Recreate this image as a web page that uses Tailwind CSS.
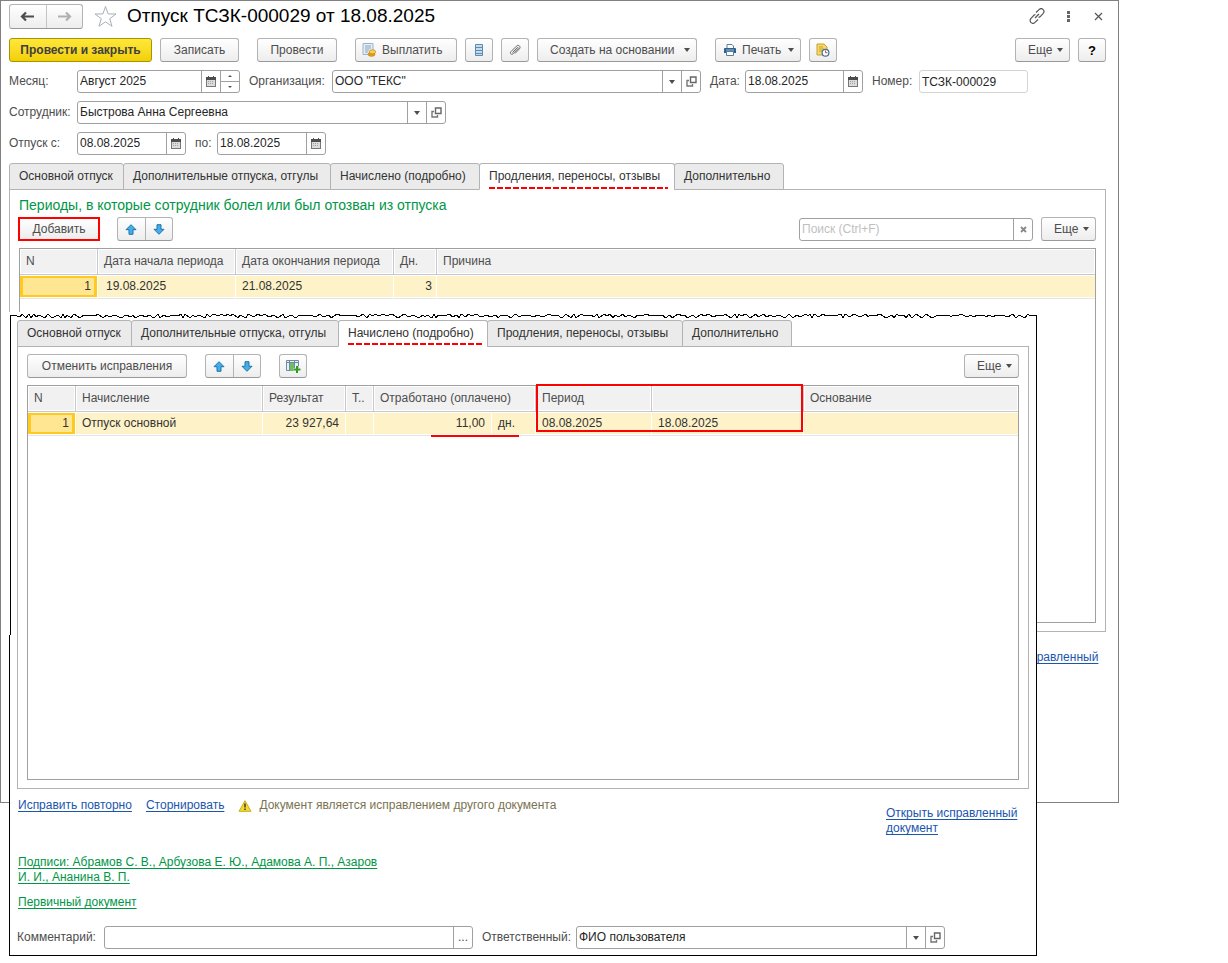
<!DOCTYPE html>
<html lang="ru">
<head>
    <meta charset="UTF-8">
    <meta name="viewport" content="width=device-width, initial-scale=1.0">
    <title>Отпуск ТСЗК-000029 от 18.08.2025</title>
    <script src="https://cdn.jsdelivr.net/npm/@tailwindcss/browser@4"></script>
</head>
<body class="bg-white font-['Liberation_Sans',Arial,sans-serif] text-xs leading-[15px] text-[#4d4d4d]">

    <!-- shared icons -->
    <svg class="hidden">
        <symbol id="i-cal" viewBox="0 0 10 11">
            <path d="M0 1h10v10H0z" fill="#777"/><path d="M0 1h10v3H0z" fill="#4d4d4d"/><path d="M1 4h8v6H1z" fill="#dcdcdc"/>
            <path d="M2 0h1v2H2zM7 0h1v2H7z" fill="#4d4d4d"/>
            <path d="M2 5h1v1H2zM4 5h1v1H4zM6 5h1v1H6zM2 7h1v1H2zM4 7h1v1H4zM6 7h1v1H6z" fill="#a0a0a0"/>
        </symbol>
        <symbol id="i-down" viewBox="0 0 6 4"><path d="M0 0h6L3 4z" fill="#4d4d4d"/></symbol>
        <symbol id="i-open" viewBox="0 0 11 11">
            <path d="M4.500 1h5.500v5.500H4.500z" fill="none" stroke="#666" stroke-width="1.400"/>
            <path d="M3 4.500H1V10h5.500V8" fill="none" stroke="#777" stroke-width="1.400"/>
        </symbol>
        <symbol id="i-up-blue" viewBox="0 0 12 11"><path d="M6 .7l5 5H8v4.600H4V5.700H1z" fill="#42aeea" stroke="#2272a8" stroke-width="1"/></symbol>
        <symbol id="i-down-blue" viewBox="0 0 12 11"><path d="M6 10.300l5-5H8V.7H4v4.600H1z" fill="#42aeea" stroke="#2272a8" stroke-width="1"/></symbol>
    </svg>

    <div class="relative mr-[109px] min-h-[956px]">

        <main class="flex min-h-[803px] flex-col border border-[#808080] pt-[3px] pr-3 pl-2">

            <header class="flex h-6 items-center">
                <div class="flex h-[25px] w-[74px] rounded-[3px] border border-[#b3b3b3] border-b-[#999] bg-linear-to-b from-white to-[#ededed]">
                    <button aria-label="Назад" class="flex flex-1 items-center justify-center border-r border-[#c4c4c4]">
                        <svg class="h-[11px] w-[15px]" viewBox="0 0 15 11"><path d="M14 5.500H2M6 1.500l-4 4 4 4" fill="none" stroke="#4d4d4d" stroke-width="2.200"/></svg>
                    </button>
                    <button aria-label="Вперед" class="flex flex-1 items-center justify-center">
                        <svg class="h-[11px] w-[15px]" viewBox="0 0 15 11"><path d="M1 5.500h12M9 1.500l4 4-4 4" fill="none" stroke="#b0b0b0" stroke-width="2.200"/></svg>
                    </button>
                </div>
                <button aria-label="В избранное" class="ml-[11px]">
                    <svg class="h-[23px] w-[23px]" viewBox="0 0 23 23"><path d="M11.500 1.500l2.600 7.400 7.900.1-6.300 4.700 2.300 7.600-6.500-4.500L5 21.300l2.300-7.600L1 9l7.900-.1z" fill="none" stroke="#a9b0b6" stroke-width="1"/></svg>
                </button>
                <h1 class="ml-[10px] text-[19px] leading-6 text-black">Отпуск ТСЗК-000029 от 18.08.2025</h1>
                <div class="ml-auto flex items-center pr-[3px]">
                    <button aria-label="Ссылка" class="mr-[22px]">
                        <svg class="h-4 w-4" viewBox="0 0 16 16"><path d="M6 10l4-4M7 4.500L10 1.700a2.700 2.700 0 0 1 4.200 3.600l-3.200 3.500a2.500 2.500 0 0 1-1.500.7M9 11.500L6 14.300a2.700 2.700 0 0 1-4.200-3.600L5 7.200a2.500 2.500 0 0 1 1.500-.7" fill="none" stroke="#555" stroke-width="1.200"/></svg>
                    </button>
                    <button aria-label="Меню" class="mr-6">
                        <svg class="h-[11px] w-[3px]" viewBox="0 0 3 11"><path d="M0 0h3v3H0zM0 4h3v3H0zM0 8h3v3H0z" fill="#666"/></svg>
                    </button>
                    <button aria-label="Закрыть">
                        <svg class="h-[9px] w-[9px]" viewBox="0 0 9 9"><path d="M1 1l7 7M8 1L1 8" stroke="#555" stroke-width="1.200"/></svg>
                    </button>
                </div>
            </header>

            <div class="mt-[10px] flex h-6 gap-2 *:flex *:items-center *:rounded-[3px] *:border">
                <button class="w-[143px] justify-center border-[#a89400] bg-linear-to-b from-[#ffe838] to-[#f2cf00] font-bold text-[#404040]">Провести и закрыть</button>
                <button class="mr-[10px] w-[79px] justify-center border-[#b3b3b3] border-b-[#999] bg-linear-to-b from-white to-[#ededed]">Записать</button>
                <button class="mr-[10px] w-20 justify-center border-[#b3b3b3] border-b-[#999] bg-linear-to-b from-white to-[#ededed]">Провести</button>
                <button class="w-[102px] gap-[6px] border-[#b3b3b3] border-b-[#999] bg-linear-to-b from-white to-[#ededed] pl-[6px]">
                    <svg class="h-[14px] w-[14px]" viewBox="0 0 14 14"><path d="M1 .5h10v11H1z" fill="#e3edf5" stroke="#9db4c8"/><path d="M3 3h6M3 5h6M3 7h4M3 9h3" stroke="#8aa6bd"/><ellipse cx="9.500" cy="11.300" rx="3.500" ry="2" fill="#e3a01c" stroke="#b67a10" stroke-width=".6"/><ellipse cx="10.500" cy="8.800" rx="3.200" ry="2" fill="#ffd04d" stroke="#b67a10" stroke-width=".6"/></svg>
                    Выплатить
                </button>
                <button aria-label="Реестр" class="w-7 justify-center border-[#b3b3b3] border-b-[#999] bg-linear-to-b from-white to-[#ededed]">
                    <svg class="h-3 w-2" viewBox="0 0 8 12"><path d="M.5.500h7v11h-7z" fill="#c3dcf0" stroke="#5f8bb0"/><path d="M1 3.500h6M1 6.500h6M1 9.500h6" stroke="#5f8bb0"/></svg>
                </button>
                <button aria-label="Файлы" class="w-7 justify-center border-[#b3b3b3] border-b-[#999] bg-linear-to-b from-white to-[#ededed]">
                    <svg class="h-3 w-3" viewBox="0 0 12 12"><path d="M3.500 8.500l4.600-4.700c.8-.8 1.700.1.900.9l-5 5.100c-1.500 1.500-3.600-.5-2.100-2.100l5.500-5.500c2.200-2.200 5 .6 2.900 2.800L6 9.500" fill="none" stroke="#666" stroke-width="1"/></svg>
                </button>
                <button class="mr-[10px] w-40 justify-between border-[#b3b3b3] border-b-[#999] bg-linear-to-b from-white to-[#ededed] pr-[6px] pl-3">Создать на основании <svg class="h-1 w-[6px]"><use href="#i-down"/></svg></button>
                <button class="w-[86px] items-center border-[#b3b3b3] border-b-[#999] bg-linear-to-b from-white to-[#ededed] px-[6px]">
                    <svg class="ml-[2px] mr-[6px] h-3 w-3" viewBox="0 0 12 12"><path d="M3 4V.5h5L9.500 2v2" fill="#fff" stroke="#5d7f9c"/><path d="M0 4.500Q0 4 1 4h10q1 0 1 .5V9H0z" fill="#2f5f8a"/><path d="M2.500 7.500h7v4h-7z" fill="#fff" stroke="#5d7f9c"/><path d="M2 6h8" stroke="#9fc0dc"/></svg>
                    Печать
                    <svg class="ml-auto h-1 w-[6px]"><use href="#i-down"/></svg>
                </button>
                <button aria-label="История" class="w-7 justify-center border-[#b3b3b3] border-b-[#999] bg-linear-to-b from-white to-[#ededed]">
                    <svg class="h-[14px] w-[14px]" viewBox="0 0 14 14"><path d="M1 1h7l3 3v8H1z" fill="#f6d76b" stroke="#c9a22c"/><path d="M3 4h4M3 6h5M3 8h3" stroke="#c9a22c"/><circle cx="9.500" cy="9.700" r="3.400" fill="#fff" stroke="#41719c" stroke-width="1.200"/><path d="M9.500 7.500v2.200h2" fill="none" stroke="#c0504d"/></svg>
                </button>
                <button class="ml-auto w-[55px] justify-between border-[#b3b3b3] border-b-[#999] bg-linear-to-b from-white to-[#ededed] pr-[6px] pl-3">Еще <svg class="h-1 w-[6px]"><use href="#i-down"/></svg></button>
                <button class="w-7 justify-center border-[#b3b3b3] border-b-[#999] bg-linear-to-b from-white to-[#ededed] text-[13px] font-bold text-black">?</button>
            </div>

            <div class="mt-2 mr-[78px] flex h-[23px] items-center">
                <label for="month" class="w-[68px]">Месяц:</label>
                <div class="flex h-[23px] w-[163px] rounded-[3px] border border-[#a0a0a0]">
                    <input id="month" value="Август 2025" class="min-w-0 flex-1 px-[2px] text-[#262626]">
                    <button aria-label="Календарь" class="flex w-[19px] items-center justify-center border-l border-[#a0a0a0]"><svg class="h-[11px] w-[10px]"><use href="#i-cal"/></svg></button>
                    <div class="flex w-[19px] flex-col border-l border-[#a0a0a0]">
                        <button aria-label="Больше" class="flex flex-1 items-center justify-center border-b border-[#a0a0a0]"><svg class="h-[2px] w-1" viewBox="0 0 4 2"><path d="M2 0l2 2H0z" fill="#555"/></svg></button>
                        <button aria-label="Меньше" class="flex flex-1 items-center justify-center"><svg class="h-[2px] w-1" viewBox="0 0 4 2"><path d="M0 0h4L2 2z" fill="#555"/></svg></button>
                    </div>
                </div>
                <label for="org" class="ml-[9px] w-[83px]">Организация:</label>
                <div class="flex h-[23px] flex-1 rounded-[3px] border border-[#a0a0a0]">
                    <select id="org" class="min-w-0 flex-1 appearance-none px-[2px] text-[#262626]"><option>ООО "ТЕКС"</option></select>
                    <span class="flex w-[19px] items-center justify-center border-l border-[#a0a0a0]"><svg class="h-1 w-[6px]"><use href="#i-down"/></svg></span>
                    <button aria-label="Открыть" class="flex w-[19px] items-center justify-center border-l border-[#a0a0a0]"><svg class="h-[11px] w-[11px]"><use href="#i-open"/></svg></button>
                </div>
                <label for="date" class="ml-[9px] w-[35px]">Дата:</label>
                <div class="flex h-[23px] w-[118px] rounded-[3px] border border-[#a0a0a0]">
                    <input id="date" value="18.08.2025" class="min-w-0 flex-1 px-[2px] text-[#262626]">
                    <button aria-label="Календарь" class="flex w-[19px] items-center justify-center border-l border-[#a0a0a0]"><svg class="h-[11px] w-[10px]"><use href="#i-cal"/></svg></button>
                </div>
                <label for="number" class="ml-[9px] w-[47px]">Номер:</label>
                <input id="number" value="ТСЗК-000029" class="h-[23px] w-[109px] rounded-[3px] border border-[#d4d4d4] px-[2px] text-[#262626]">
            </div>

            <div class="mt-2 flex h-[23px] items-center">
                <label for="employee" class="w-[68px]">Сотрудник:</label>
                <div class="flex h-[23px] w-[369px] rounded-[3px] border border-[#a0a0a0]">
                    <select id="employee" class="min-w-0 flex-1 appearance-none px-[2px] text-[#262626]"><option>Быстрова Анна Сергеевна</option></select>
                    <span class="flex w-[19px] items-center justify-center border-l border-[#a0a0a0]"><svg class="h-1 w-[6px]"><use href="#i-down"/></svg></span>
                    <button aria-label="Открыть" class="flex w-[19px] items-center justify-center border-l border-[#a0a0a0]"><svg class="h-[11px] w-[11px]"><use href="#i-open"/></svg></button>
                </div>
            </div>

            <div class="mt-2 flex h-[23px] items-center">
                <label for="from" class="w-[68px]">Отпуск с:</label>
                <div class="flex h-[23px] w-[109px] rounded-[3px] border border-[#a0a0a0]">
                    <input id="from" value="08.08.2025" class="min-w-0 flex-1 px-[2px] text-[#262626]">
                    <button aria-label="Календарь" class="flex w-[19px] items-center justify-center border-l border-[#a0a0a0]"><svg class="h-[11px] w-[10px]"><use href="#i-cal"/></svg></button>
                </div>
                <label for="to" class="ml-[9px] w-[22px]">по:</label>
                <div class="flex h-[23px] w-[109px] rounded-[3px] border border-[#a0a0a0]">
                    <input id="to" value="18.08.2025" class="min-w-0 flex-1 px-[2px] text-[#262626]">
                    <button aria-label="Календарь" class="flex w-[19px] items-center justify-center border-l border-[#a0a0a0]"><svg class="h-[11px] w-[10px]"><use href="#i-cal"/></svg></button>
                </div>
            </div>

            <div role="tablist" class="relative z-10 mt-2 -mb-px flex h-[27px] text-[#333] *:rounded-t-[3px] *:border *:border-[#b3b3b3] *:pl-[9px] *:text-left">
                <button role="tab" class="w-[115px] bg-[#ebebeb]">Основной отпуск</button>
                <button role="tab" class="-ml-px w-[208px] bg-[#ebebeb]">Дополнительные отпуска, отгулы</button>
                <button role="tab" class="-ml-px w-[150px] bg-[#ebebeb]">Начислено (подробно)</button>
                <button role="tab" aria-selected="true" class="-ml-px flex w-[196px] flex-col justify-between border-b-white! bg-white pt-[5px]">
                    Продления, переносы, отзывы
                    <span class="h-[2px] w-[179px] bg-[repeating-linear-gradient(90deg,#f00_0_6px,transparent_6px_8px)]"></span>
                </button>
                <button role="tab" class="-ml-px w-[110px] bg-[#ebebeb]">Дополнительно</button>
            </div>

            <section class="border border-[#b3b3b3] px-[9px] pb-2">
                <h2 class="h-[27px] text-sm leading-[30px] text-[#009646]">Периоды, в которые сотрудник болел или был отозван из отпуска</h2>
                <div class="flex h-6 items-center">
                    <button class="-ml-px h-6 w-[82px] border-2 border-[#f00] bg-linear-to-b from-white to-[#ededed]">Добавить</button>
                    <div class="ml-[17px] flex h-6 w-14 rounded-[3px] border border-[#b3b3b3] border-b-[#999] bg-linear-to-b from-white to-[#ededed]">
                        <button aria-label="Вверх" class="flex flex-1 items-center justify-center border-r border-[#b3b3b3]"><svg class="h-[11px] w-3"><use href="#i-up-blue"/></svg></button>
                        <button aria-label="Вниз" class="flex flex-1 items-center justify-center"><svg class="h-[11px] w-3"><use href="#i-down-blue"/></svg></button>
                    </div>
                    <div class="ml-auto flex h-[23px] w-[234px] rounded-[3px] border border-[#a0a0a0]">
                        <input aria-label="Поиск" placeholder="Поиск (Ctrl+F)" class="min-w-0 flex-1 px-[2px] placeholder:text-[#bfbfbf]">
                        <button aria-label="Очистить" class="flex w-[19px] items-center justify-center border-l border-[#a0a0a0]"><svg class="h-[7px] w-[7px]" viewBox="0 0 7 7"><path d="M1 1l5 5M6 1L1 6" stroke="#888" stroke-width="1.800"/></svg></button>
                    </div>
                    <button class="ml-2 flex h-6 w-[55px] items-center justify-between rounded-[3px] border border-[#b3b3b3] border-b-[#999] bg-linear-to-b from-white to-[#ededed] pr-[6px] pl-3">Еще <svg class="h-1 w-[6px]"><use href="#i-down"/></svg></button>
                </div>
                <div class="mt-[7px] min-h-[375px] border border-[#a0a0a0]">
                    <table class="w-full table-fixed border-separate border-spacing-0 text-left">
                        <colgroup><col class="w-[78px]"><col class="w-[138px]"><col class="w-[158px]"><col class="w-[43px]"><col></colgroup>
                        <thead class="*:*:h-[26px] *:*:border-r *:*:border-b *:*:border-[#c8c8cc] *:*:bg-[#f1f1f1] *:*:px-[6px] *:*:font-normal *:*:shadow-[inset_0_0_0_1px_#fff]">
                            <tr><th>N</th><th>Дата начала периода</th><th>Дата окончания периода</th><th>Дн.</th><th class="border-r-0!">Причина</th></tr>
                        </thead>
                        <tbody class="text-[#333] *:*:h-6 *:*:border-r *:*:border-b *:*:border-r-white *:*:border-b-[#e5e5e5] *:*:bg-[#fef2c8] *:*:px-[6px] *:*:shadow-[inset_0_1px_#fff,inset_0_-1px_#fff]">
                            <tr>
                                <td class="bg-[#ffe692]! text-right shadow-[inset_0_1px_#fff,inset_0_-1px_#fff,inset_0_0_0_3px_#ffc91f]!">1</td>
                                <td class="pl-2!">19.08.2025</td><td>21.08.2025</td><td class="pr-1! text-right">3</td><td class="border-r-0!"></td>
                            </tr>
                        </tbody>
                    </table>
                </div>
            </section>

            <a href="#" class="mt-[18px] mr-1 w-[135px] self-end text-[#1c55ae] underline underline-offset-2">Открыть исправленный документ</a>
        </main>

        <!-- second fragment of the same form, torn off at the top and laid over the first -->
        <div class="absolute top-[312px] right-[82px] left-[9px] border-b border-black bg-white px-2 pt-2 pb-[6px]">
            <svg class="absolute top-0 left-0 h-[7px] w-full" viewBox="0 0 1028 7" preserveAspectRatio="none"><path id="tear" fill="none" stroke="#000" shape-rendering="crispEdges"/></svg>
            <span class="absolute top-1 left-px h-[319px] w-px bg-black"></span>
            <span class="absolute top-[323px] bottom-0 left-0 w-px bg-black"></span>
            <span class="absolute top-[3px] right-0 bottom-0 w-px bg-black"></span>

            <div role="tablist" class="relative z-10 -mb-px flex h-[27px] text-[#333] *:rounded-t-[3px] *:border *:border-[#b3b3b3] *:pl-[9px] *:text-left">
                <button role="tab" class="w-[115px] bg-[#ebebeb]">Основной отпуск</button>
                <button role="tab" class="-ml-px w-[208px] bg-[#ebebeb]">Дополнительные отпуска, отгулы</button>
                <button role="tab" aria-selected="true" class="-ml-px flex w-[150px] flex-col justify-between border-b-white! bg-white pt-[5px] pb-px">
                    Начислено (подробно)
                    <span class="h-[2px] w-[136px] bg-[repeating-linear-gradient(90deg,#f00_0_6px,transparent_6px_8px)]"></span>
                </button>
                <button role="tab" class="-ml-px w-[196px] bg-[#ebebeb]">Продления, переносы, отзывы</button>
                <button role="tab" class="-ml-px w-[110px] bg-[#ebebeb]">Дополнительно</button>
            </div>

            <section class="border border-[#b3b3b3] px-[9px] pt-[7px] pb-2">
                <div class="flex h-6">
                    <button class="w-40 rounded-[3px] border border-[#b3b3b3] border-b-[#999] bg-linear-to-b from-white to-[#ededed]">Отменить исправления</button>
                    <div class="ml-[18px] flex w-14 rounded-[3px] border border-[#b3b3b3] border-b-[#999] bg-linear-to-b from-white to-[#ededed]">
                        <button aria-label="Вверх" class="flex flex-1 items-center justify-center border-r border-[#b3b3b3]"><svg class="h-[11px] w-3"><use href="#i-up-blue"/></svg></button>
                        <button aria-label="Вниз" class="flex flex-1 items-center justify-center"><svg class="h-[11px] w-3"><use href="#i-down-blue"/></svg></button>
                    </div>
                    <button aria-label="Добавить колонку" class="ml-[18px] flex w-7 items-center justify-center rounded-[3px] border border-[#b3b3b3] border-b-[#999] bg-linear-to-b from-white to-[#ededed]">
                        <svg class="h-[13px] w-[15px]" viewBox="0 0 15 13"><path d="M.5.500h12v10H.5z" fill="#e8eff5" stroke="#6d8ba5"/><path d="M4 3h4v8H4z" fill="#6cc05f"/><path d="M0 2.500h13M3.500 0v11M8.500 0v11" stroke="#6d8ba5"/><path d="M11 6v7M7.500 9.500h7" stroke="#fff" stroke-width="3"/><path d="M11 6v7M7.500 9.500h7" stroke="#2e9a22" stroke-width="2"/></svg>
                    </button>
                    <button class="ml-auto flex w-[55px] items-center justify-between rounded-[3px] border border-[#b3b3b3] border-b-[#999] bg-linear-to-b from-white to-[#ededed] pr-[6px] pl-3">Еще <svg class="h-1 w-[6px]"><use href="#i-down"/></svg></button>
                </div>
                <div class="relative mt-[7px] min-h-[395px] border border-[#a0a0a0]">
                    <table class="w-full table-fixed border-separate border-spacing-0 text-left">
                        <colgroup><col class="w-12"><col class="w-[187px]"><col class="w-[83px]"><col class="w-7"><col class="w-[118px]"><col class="w-[44px]"><col class="w-[116px]"><col class="w-[152px]"><col></colgroup>
                        <thead class="*:*:h-[26px] *:*:border-r *:*:border-b *:*:border-[#c8c8cc] *:*:bg-[#f1f1f1] *:*:px-[6px] *:*:font-normal *:*:shadow-[inset_0_0_0_1px_#fff]">
                            <tr><th>N</th><th>Начисление</th><th>Результат</th><th>Т..</th><th colspan="2">Отработано (оплачено)</th><th>Период</th><th></th><th class="border-r-0!">Основание</th></tr>
                        </thead>
                        <tbody class="text-[#333] *:*:h-6 *:*:border-r *:*:border-b *:*:border-r-white *:*:border-b-[#e5e5e5] *:*:bg-[#fef2c8] *:*:px-[6px] *:*:shadow-[inset_0_1px_#fff,inset_0_-1px_#fff]">
                            <tr>
                                <td class="bg-[#ffe692]! text-right shadow-[inset_0_1px_#fff,inset_0_-1px_#fff,inset_0_0_0_3px_#ffc91f]!">1</td>
                                <td>Отпуск основной</td><td class="text-right">23 927,64</td><td></td><td class="text-right">11,00</td><td>дн.</td><td>08.08.2025</td><td>18.08.2025</td><td class="border-r-0!"></td>
                            </tr>
                        </tbody>
                    </table>
                    <!-- red marks -->
                    <span class="absolute -top-[2px] left-[508px] h-12 w-[267px] border-2 border-[#f00]"></span>
                    <span class="absolute top-[49px] left-[403px] h-[2px] w-[88px] bg-[#f00]"></span>
                </div>
            </section>

            <div class="mt-[9px] flex justify-between pl-px">
                <div>
                    <div class="flex items-center">
                        <a href="#" class="text-[#1c55ae] underline underline-offset-2">Исправить повторно</a>
                        <a href="#" class="ml-[14px] text-[#1c55ae] underline underline-offset-2">Сторнировать</a>
                        <svg class="ml-[14px] h-3 w-[14px]" viewBox="0 0 14 12"><path d="M7 .7l6 10.600H1z" fill="#f5dc2a" stroke="#c9ac18" stroke-linejoin="round"/><path d="M6.200 3.500h1.600v4H6.200zM6.200 8.500h1.600V10H6.200z" fill="#444"/></svg>
                        <span class="ml-[7px] text-[#7a7350]">Документ является исправлением другого документа</span>
                    </div>
                    <div class="mt-[42px] w-[360px]"><a href="#" class="text-[#009646] underline underline-offset-2">Подписи: Абрамов С. В., Арбузова Е. Ю., Адамова А. П., Азаров И. И., Ананина В. П.</a></div>
                    <div class="mt-[10px]"><a href="#" class="text-[#009646] underline underline-offset-2">Первичный документ</a></div>
                </div>
                <div class="mt-2 w-[143px]"><a href="#" class="text-[#1c55ae] underline underline-offset-2">Открыть исправленный документ</a></div>
            </div>

            <div class="mt-4 flex h-[23px] items-center">
                <label for="comment" class="w-[87px]">Комментарий:</label>
                <div class="flex h-[23px] w-[369px] rounded-[3px] border border-[#a0a0a0]">
                    <input id="comment" class="min-w-0 flex-1 px-[2px] text-[#262626]">
                    <button aria-label="Выбрать" class="w-[19px] border-l border-[#a0a0a0]">...</button>
                </div>
                <label for="responsible" class="ml-[9px] w-[94px]">Ответственный:</label>
                <div class="flex h-[23px] w-[369px] rounded-[3px] border border-[#a0a0a0]">
                    <select id="responsible" class="min-w-0 flex-1 appearance-none px-[2px] text-[#262626]"><option>ФИО пользователя</option></select>
                    <span class="flex w-[19px] items-center justify-center border-l border-[#a0a0a0]"><svg class="h-1 w-[6px]"><use href="#i-down"/></svg></span>
                    <button aria-label="Открыть" class="flex w-[19px] items-center justify-center border-l border-[#a0a0a0]"><svg class="h-[11px] w-[11px]"><use href="#i-open"/></svg></button>
                </div>
            </div>
        </div>
    </div>

    <script>
        // ragged line along the torn edge, same shape on every load
        let seed = 29;
        function next(n) {
            seed = (seed * 1103 + 12345) % 65521;
            return seed % n;
        }
        let d = 'M1 4';
        let x = 1;
        let up = true;
        while (x < 1020) {
            x += 2 + next(5);
            d += ` L${x} ${up ? 2 + next(2) : 4 + next(3)}`;
            up = !up;
        }
        document.getElementById('tear').setAttribute('d', d + ' L1028 3');
    </script>
</body>
</html>
